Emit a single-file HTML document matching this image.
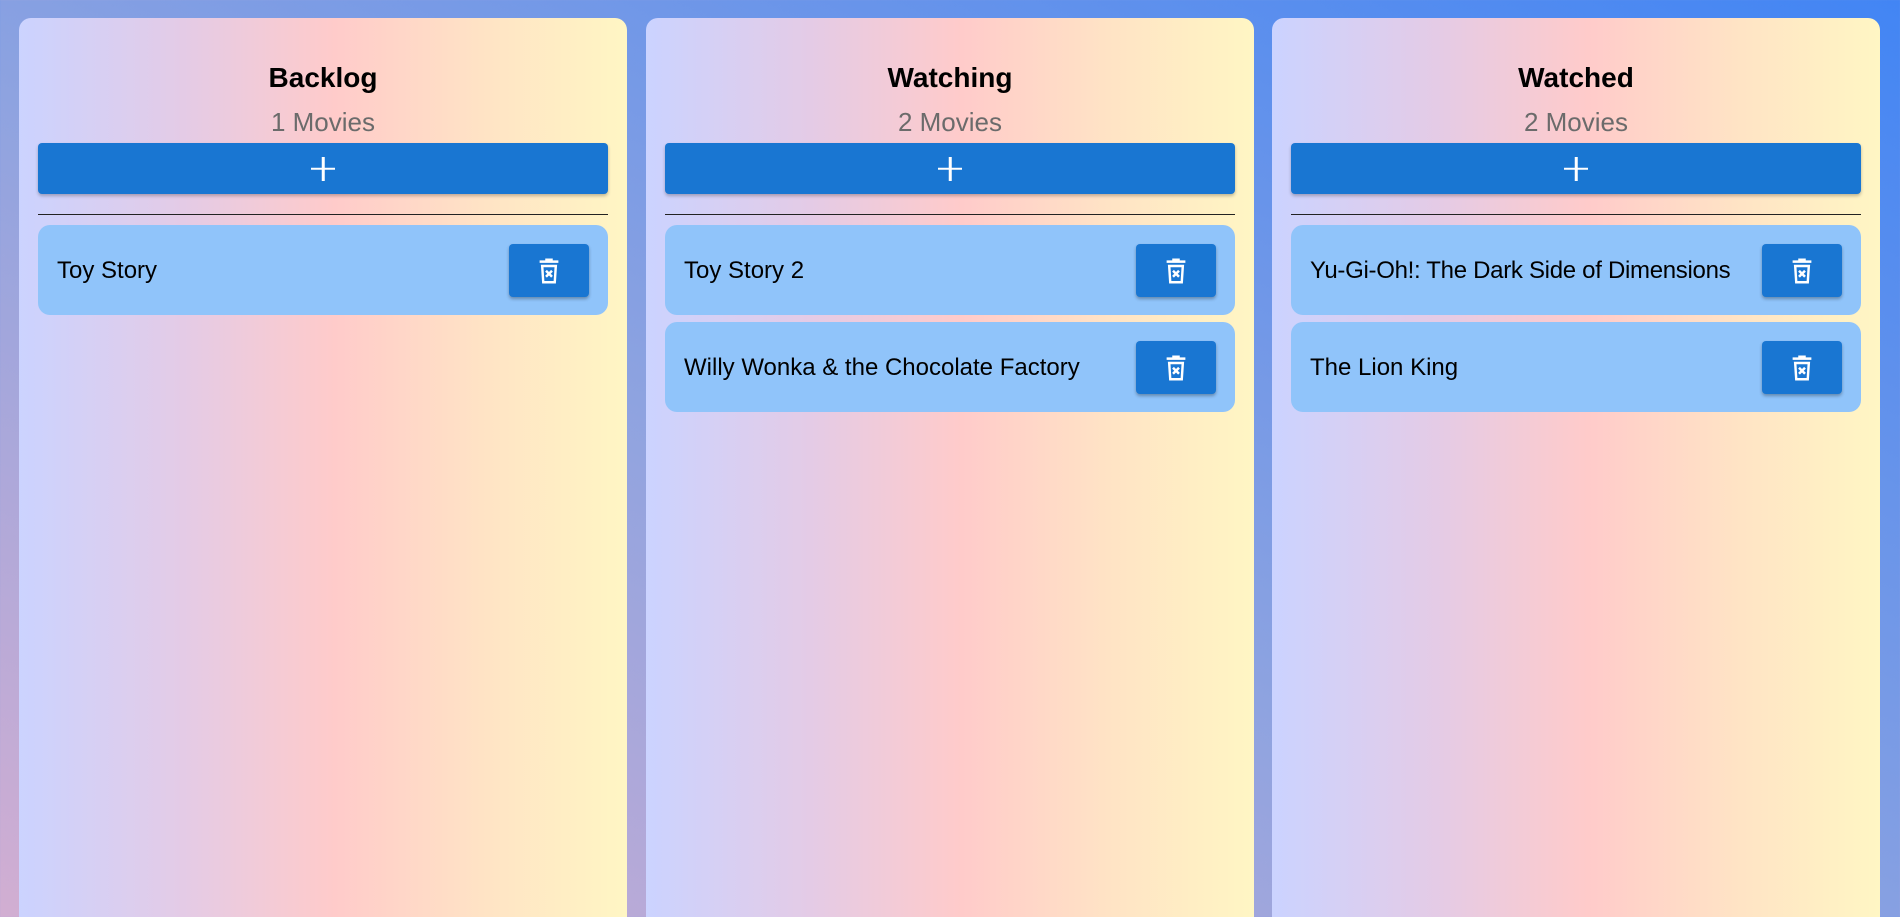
<!DOCTYPE html>
<html><head><style>
html,body{margin:0;width:1900px;height:917px;overflow:hidden}
body{background:linear-gradient(to top right,#d2aed2 0%,#8ea3e0 45%,#4285f4 100%);font-family:"Liberation Sans","DejaVu Sans",sans-serif;position:relative}
.col{position:absolute;top:18px;width:608px;height:920px;border-radius:12px;background:linear-gradient(90deg,#cbd3ff 0%,#e4cbe6 27%,#ffcbca 52%,#ffe3c5 76%,#fff6c4 100%);box-sizing:border-box;padding:0 19px}
h2{margin:0;text-align:center;font-size:28px;font-weight:bold;color:#000;padding-top:43px;line-height:34px}
.cnt{text-align:center;font-size:26px;color:#6b6b6b;line-height:32px;margin-top:11px}
.add{height:51px;background:#1976d2;border-radius:4px;margin-top:5px;box-shadow:0 2px 3px rgba(0,0,0,.25);position:relative}
.add:before{content:"";position:absolute;left:50%;top:50%;width:24px;height:2.5px;background:#fff;transform:translate(-50%,-50%)}
.add:after{content:"";position:absolute;left:50%;top:50%;width:2.5px;height:24px;background:#fff;transform:translate(-50%,-50%)}
hr{border:0;border-top:1px solid #222;margin:20px 0 10px}
.card{height:90px;background:#90c4fa;border-radius:12px;margin-bottom:7px;position:relative;display:flex;align-items:center;padding-left:19px;font-size:24px;color:#000;padding-top:2px;box-sizing:border-box}
.del{position:absolute;right:19px;top:19px;width:80px;height:53px;background:#1976d2;border-radius:4px;box-shadow:0 2px 3px rgba(0,0,0,.3);display:flex;align-items:center;justify-content:center}
</style></head><body>
<svg width="0" height="0" style="position:absolute"><defs><symbol id="t" viewBox="0 0 24 24"><path fill="#fff" d="M9 2h6v1.5h4.5V5.5h-15V3.5H9z M5.5 7h13l-1 15h-11z M7.6 9l0.7 11h7.4l0.7-11z"/><path stroke="#fff" stroke-width="2" d="M9.6 11.8l4.8 4.8M14.4 11.8l-4.8 4.8"/></symbol></defs></svg>
<div class="col" style="left:19px"><h2>Backlog</h2><div class="cnt">1 Movies</div><div class="add"></div><hr>
<div class="card">Toy Story<div class="del"><svg width="30" height="34"><use href="#t"/></svg></div></div></div>
<div class="col" style="left:646px"><h2>Watching</h2><div class="cnt">2 Movies</div><div class="add"></div><hr>
<div class="card">Toy Story 2<div class="del"><svg width="30" height="34"><use href="#t"/></svg></div></div>
<div class="card">Willy Wonka &amp; the Chocolate Factory<div class="del"><svg width="30" height="34"><use href="#t"/></svg></div></div></div>
<div class="col" style="left:1272px"><h2>Watched</h2><div class="cnt">2 Movies</div><div class="add"></div><hr>
<div class="card" style="letter-spacing:-0.3px">Yu-Gi-Oh!: The Dark Side of Dimensions<div class="del"><svg width="30" height="34"><use href="#t"/></svg></div></div>
<div class="card">The Lion King<div class="del"><svg width="30" height="34"><use href="#t"/></svg></div></div></div>
</body></html>
